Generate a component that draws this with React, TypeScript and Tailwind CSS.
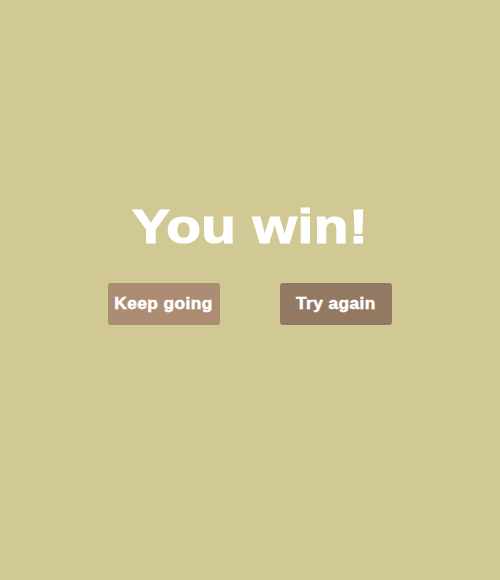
import React from "react";

const App = () => {
  return (
    <div className="w-[500px] h-[580px] bg-[#d1c993] flex flex-col items-center pt-[197px] font-['Liberation_Sans',Arial,sans-serif] text-white">
      <p className="text-[48px] font-bold leading-[60px]">
        <span className="inline-block scale-x-[1.18] tracking-[0.5px] [-webkit-text-stroke:1.2px_white]">You win!</span>
      </p>
      <div className="flex gap-[60px] mt-[26px]">
        <button className="w-[112px] h-[42px] rounded-[3px] bg-[#ad8c74] text-[16px] font-bold">
          <span className="inline-block scale-x-[1.08] tracking-[0.4px] [-webkit-text-stroke:0.5px_white]">Keep going</span>
        </button>
        <button className="w-[112px] h-[42px] rounded-[3px] bg-[#937862] text-[16px] font-bold">
          <span className="inline-block scale-x-[1.08] tracking-[0.4px] [-webkit-text-stroke:0.5px_white]">Try again</span>
        </button>
      </div>
    </div>
  );
};

export default App;
